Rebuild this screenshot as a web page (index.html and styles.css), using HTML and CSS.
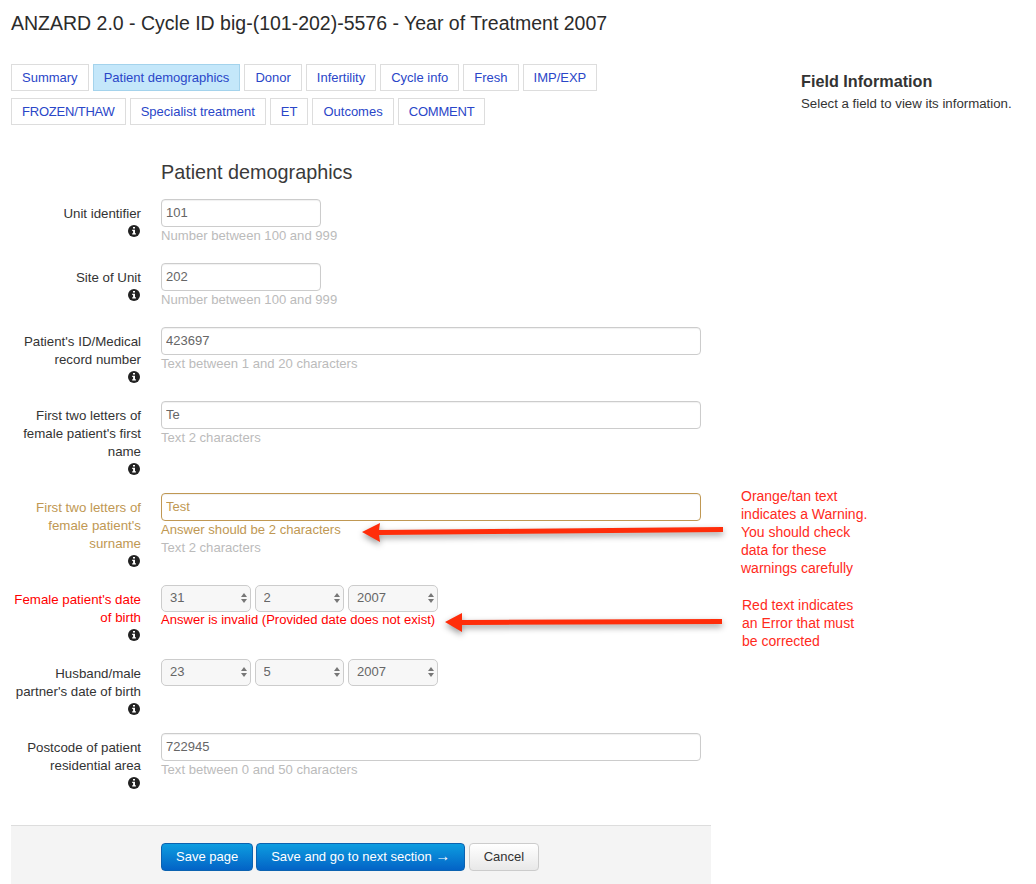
FILE: index.html
```html
<!DOCTYPE html>
<html lang="en">
<head>
    <meta charset="UTF-8">
    <meta name="viewport" content="width=device-width, initial-scale=1.0">
    <title>ANZARD 2.0</title>
    <link rel="stylesheet" href="styles.css">
</head>
<body>
    <svg class="icon-defs" width="0" height="0">
        <symbol id="info" viewBox="0 0 12 12">
            <circle cx="6" cy="6" r="6" fill="#222"/>
            <path fill="#fff" d="M5 2h2v1.6H5zM4.2 4.8H7v3.4h.9v1.3H4.2V8.2h.9V6.1h-.9z"/>
        </symbol>
    </svg>

    <div class="page">
        <h1>ANZARD 2.0 - Cycle ID big-(101-202)-5576 - Year of Treatment 2007</h1>

        <div class="columns">
            <div class="main">
                <div class="tabs">
                    <a class="tab" href="#">Summary</a>
                    <a class="tab active" href="#">Patient demographics</a>
                    <a class="tab" href="#">Donor</a>
                    <a class="tab" href="#">Infertility</a>
                    <a class="tab" href="#">Cycle info</a>
                    <a class="tab" href="#">Fresh</a>
                    <a class="tab" href="#">IMP/EXP</a>
                    <a class="tab caps" href="#">FROZEN/THAW</a>
                    <a class="tab" href="#">Specialist treatment</a>
                    <a class="tab" href="#">ET</a>
                    <a class="tab" href="#">Outcomes</a>
                    <a class="tab caps" href="#">COMMENT</a>
                </div>

                <form class="form">
                    <h2>Patient demographics</h2>

                    <div class="row">
                        <label>Unit identifier <svg class="info"><use href="#info"/></svg></label>
                        <div class="field">
                            <input class="short" type="text" value="101">
                            <div class="help">Number between 100 and 999</div>
                        </div>
                    </div>

                    <div class="row">
                        <label>Site of Unit <svg class="info"><use href="#info"/></svg></label>
                        <div class="field">
                            <input class="short" type="text" value="202">
                            <div class="help">Number between 100 and 999</div>
                        </div>
                    </div>

                    <div class="row">
                        <label>Patient's ID/Medical record number <svg class="info"><use href="#info"/></svg></label>
                        <div class="field">
                            <input type="text" value="423697">
                            <div class="help">Text between 1 and 20 characters</div>
                        </div>
                    </div>

                    <div class="row">
                        <label>First two letters of female patient's first name <svg class="info"><use href="#info"/></svg></label>
                        <div class="field">
                            <input type="text" value="Te">
                            <div class="help">Text 2 characters</div>
                        </div>
                    </div>

                    <div class="row warning">
                        <label>First two letters of female patient's surname <svg class="info"><use href="#info"/></svg></label>
                        <div class="field">
                            <input type="text" value="Test">
                            <div class="message">Answer should be 2 characters</div>
                            <div class="help">Text 2 characters</div>
                        </div>
                    </div>

                    <div class="row error">
                        <label>Female patient's date of birth <svg class="info"><use href="#info"/></svg></label>
                        <div class="field">
                            <div class="date">
                                <span class="select"><select><option>31</option></select></span>
                                <span class="select"><select><option>2</option></select></span>
                                <span class="select"><select><option>2007</option></select></span>
                            </div>
                            <div class="message">Answer is invalid (Provided date does not exist)</div>
                        </div>
                    </div>

                    <div class="row">
                        <label>Husband/male partner's date of birth <svg class="info"><use href="#info"/></svg></label>
                        <div class="field">
                            <div class="date">
                                <span class="select"><select><option>23</option></select></span>
                                <span class="select"><select><option>5</option></select></span>
                                <span class="select"><select><option>2007</option></select></span>
                            </div>
                        </div>
                    </div>

                    <div class="row">
                        <label>Postcode of patient residential area <svg class="info"><use href="#info"/></svg></label>
                        <div class="field">
                            <input type="text" value="722945">
                            <div class="help">Text between 0 and 50 characters</div>
                        </div>
                    </div>

                    <div class="actions">
                        <button class="btn primary" type="button">Save page</button>
                        <button class="btn primary" type="button">Save and go to next section <span class="arrow">&#8594;</span></button>
                        <button class="btn cancel" type="button">Cancel</button>
                    </div>
                </form>
            </div>

            <div class="side">
                <h3>Field Information</h3>
                <p>Select a field to view its information.</p>
            </div>
        </div>
    </div>

    <!-- notes drawn on top of the screenshot -->
    <svg class="arrows" width="1036" height="884">
        <path d="M723 527 L379 530 L380 523 L362 532 L380 542 L379 535 L723 532 Z"/>
        <path d="M722 619 L462 620 L462 613 L445 622 L462 632 L462 625 L722 624 Z"/>
    </svg>
    <div class="note note-warning">Orange/tan text<br>indicates a Warning.<br>You should check<br>data for these<br>warnings carefully</div>
    <div class="note note-error">Red text indicates<br>an Error that must<br>be corrected</div>
</body>
</html>
```

FILE: styles.css
```css
html, body { height: 884px; overflow: hidden; }
body {
    margin: 0;
    font-family: "Liberation Sans", Arial, sans-serif;
    font-size: 13px;
    line-height: 18px;
    color: #333;
    background-color: #fff;
}
.icon-defs { position: absolute; }
.page { padding: 11px 11px 0; }
h1 {
    margin: 0;
    font-size: 19.5px;
    font-weight: normal;
    line-height: 24px;
    color: #2b2b2b;
}
.columns { display: flex; margin-top: 29px; }
.main { width: 700px; flex: none; }
.side { margin-left: 90px; padding-top: 8px; }
.side h3 { margin: 0; font-size: 16.2px; line-height: 18px; color: #333; }
.side p { margin: 5px 0 0; font-size: 13.25px; }

.tabs { display: flex; flex-wrap: wrap; gap: 7px 4px; }
.tab {
    padding: 5px 10px;
    line-height: 15px;
    border: 1px solid #ddd;
    color: #2a46c8;
    text-decoration: none;
}
.tab.active { background-color: #c4e7fa; border-color: #a4d3ec; }
.tab.caps { letter-spacing: -0.2px; }

.form { margin-top: 35px; }
h2 {
    margin: 0 0 15px 150px;
    font-size: 19.8px;
    font-weight: normal;
    line-height: 24px;
    color: #3a3a3a;
}
.row { display: flex; margin-bottom: 15px; }
.row label {
    width: 130px;
    flex: none;
    padding-top: 6px;
    font-size: 13.3px;
    text-align: right;
}
.info { display: block; width: 12px; height: 12px; margin: 1.5px 1px 3.5px auto; }
.field { margin-left: 20px; width: 540px; }
input {
    display: block;
    box-sizing: border-box;
    width: 100%;
    height: 28px;
    padding: 0 4px 2px;
    border: 1px solid #ccc;
    border-radius: 4px;
    box-shadow: inset 0 1px 1px rgba(0,0,0,0.06);
    font: 13px "Liberation Sans", Arial, sans-serif;
    color: #666;
}
input.short { width: 160px; }
.help { color: #bbb; margin-bottom: 3px; font-size: 13.1px; }
.message { font-size: 13.1px; }
.error .message { margin-top: -1px; font-size: 13.05px; }

.warning label, .warning .message, .warning input { color: #c09853; }
.warning input { border-color: #c09853; }
.error label, .error .message { color: #f00; }

.date { display: flex; gap: 4px; height: 27px; }
.select { position: relative; display: block; width: 89.5px; height: 27px; }
.select select {
    appearance: none;
    box-sizing: border-box;
    width: 100%;
    height: 27px;
    padding: 0 0 2px 8px;
    border: 1px solid #ccc;
    border-radius: 5px;
    background-color: #f7f7f7;
    font: 13px "Liberation Sans", Arial, sans-serif;
    color: #666;
}
.select::before, .select::after {
    content: "";
    position: absolute;
    right: 4px;
    border-left: 3.5px solid transparent;
    border-right: 3.5px solid transparent;
}
.select::before { top: 8px; border-bottom: 4.5px solid #777; }
.select::after { top: 14px; border-top: 4.5px solid #777; }

.actions {
    display: flex;
    gap: 3px;
    margin-top: 33px;
    padding: 17px 0 14px 150px;
    border-top: 1px solid #ddd;
    background-color: #f4f4f4;
}
.btn {
    height: 28px;
    padding: 0 14px 2px;
    border: 1px solid #ccc;
    border-radius: 4px;
    background: linear-gradient(#fff, #e8e8e8);
    font: 13px "Liberation Sans", Arial, sans-serif;
    color: #333;
}
.btn.primary {
    border-color: #0b62b0;
    background: linear-gradient(#0d9de0, #0363c6);
    color: #fff;
}
.btn.cancel { margin-left: 1px; padding: 0 13.5px 2px; }
.arrow { font-size: 15px; line-height: 13px; }

.arrows {
    position: absolute;
    left: 0;
    top: 0;
    pointer-events: none;
    filter: drop-shadow(0 3px 3px rgba(0,0,0,0.4));
}
.arrows path { fill: #ff2d0a; }
.note {
    position: absolute;
    font-size: 14px;
    line-height: 18px;
    color: #ff2a1c;
}
.note-warning { left: 741px; top: 487px; }
.note-error { left: 742px; top: 596px; }
```
